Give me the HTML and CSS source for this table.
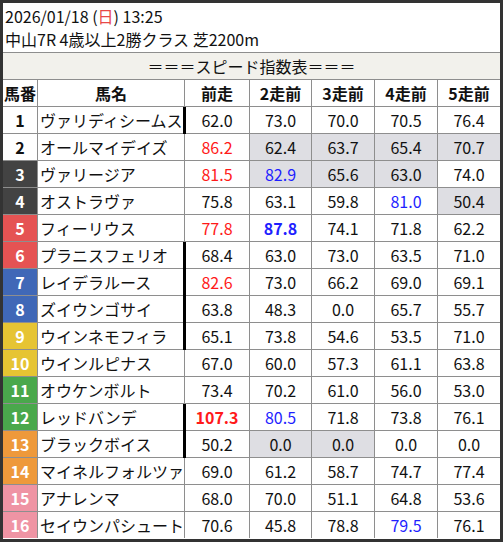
FILE: index.html
```html
<!DOCTYPE html>
<html lang="ja">
<head>
<meta charset="utf-8">
<link rel="stylesheet" href="styles.css">
</head>
<body>
<div class="frame">
  <div class="info">
    <div class="line">2026/01/18 (<span class="sun">日</span>) 13:25</div>
    <div class="line">中山7R 4歳以上2勝クラス 芝2200m</div>
  </div>
  <div class="title">＝＝＝スピード指数表＝＝＝</div>
  <div class="grid">
    <div class="h">馬番</div><div class="h">馬名</div><div class="h">前走</div><div class="h">2走前</div><div class="h">3走前</div><div class="h">4走前</div><div class="h">5走前</div>

    <div class="no w1">1</div><div class="name bar">ヴァリディシームス</div><div class="v">62.0</div><div class="v">73.0</div><div class="v">70.0</div><div class="v">70.5</div><div class="v">76.4</div>

    <div class="no w1">2</div><div class="name">オールマイデイズ</div><div class="v red">86.2</div><div class="v g">62.4</div><div class="v g">63.7</div><div class="v g">65.4</div><div class="v g">70.7</div>

    <div class="no w2">3</div><div class="name">ヴァリージア</div><div class="v red">81.5</div><div class="v g blue">82.9</div><div class="v g">65.6</div><div class="v g">63.0</div><div class="v">74.0</div>

    <div class="no w2">4</div><div class="name">オストラヴァ</div><div class="v">75.8</div><div class="v">63.1</div><div class="v">59.8</div><div class="v blue">81.0</div><div class="v g">50.4</div>

    <div class="no w3">5</div><div class="name">フィーリウス</div><div class="v red">77.8</div><div class="v blue b">87.8</div><div class="v">74.1</div><div class="v">71.8</div><div class="v">62.2</div>

    <div class="no w3">6</div><div class="name bar">プラニスフェリオ</div><div class="v">68.4</div><div class="v">63.0</div><div class="v">73.0</div><div class="v">63.5</div><div class="v">71.0</div>

    <div class="no w4">7</div><div class="name bar">レイデラルース</div><div class="v red">82.6</div><div class="v">73.0</div><div class="v">66.2</div><div class="v">69.0</div><div class="v">69.1</div>

    <div class="no w4">8</div><div class="name bar">ズイウンゴサイ</div><div class="v">63.8</div><div class="v">48.3</div><div class="v">0.0</div><div class="v">65.7</div><div class="v">55.7</div>

    <div class="no w5">9</div><div class="name bar">ウインネモフィラ</div><div class="v">65.1</div><div class="v">73.8</div><div class="v">54.6</div><div class="v">53.5</div><div class="v">71.0</div>

    <div class="no w5">10</div><div class="name">ウインルピナス</div><div class="v">67.0</div><div class="v">60.0</div><div class="v">57.3</div><div class="v">61.1</div><div class="v">63.8</div>

    <div class="no w6">11</div><div class="name">オウケンボルト</div><div class="v">73.4</div><div class="v">70.2</div><div class="v">61.0</div><div class="v">56.0</div><div class="v">53.0</div>

    <div class="no w6">12</div><div class="name bar">レッドバンデ</div><div class="v red b">107.3</div><div class="v blue">80.5</div><div class="v">71.8</div><div class="v">73.8</div><div class="v">76.1</div>

    <div class="no w7">13</div><div class="name bar">ブラックボイス</div><div class="v">50.2</div><div class="v g">0.0</div><div class="v g">0.0</div><div class="v">0.0</div><div class="v">0.0</div>

    <div class="no w7">14</div><div class="name">マイネルフォルツァ</div><div class="v">69.0</div><div class="v">61.2</div><div class="v">58.7</div><div class="v">74.7</div><div class="v">77.4</div>

    <div class="no w8">15</div><div class="name">アナレンマ</div><div class="v">68.0</div><div class="v">70.0</div><div class="v">51.1</div><div class="v">64.8</div><div class="v">53.6</div>

    <div class="no w8">16</div><div class="name">セイウンパシュート</div><div class="v">70.6</div><div class="v">45.8</div><div class="v">78.8</div><div class="v blue">79.5</div><div class="v">76.1</div>
  </div>
</div>
</body>
</html>
```

FILE: styles.css
```css
* { box-sizing: border-box; }
html, body { margin: 0; padding: 0; background: #fff; }
body {
  font-family: "Noto Sans CJK JP", "Noto Sans", sans-serif;
  font-size: 16px;
  color: #111;
}
.frame {
  width: 503px;
  height: 542px;
  border: 3px solid #333;
  background: #fff;
  overflow: hidden;
}
.info {
  height: 50px;
  padding: 2px 0 0 2px;
  border-bottom: 1px solid #8e8e8e;
}
.line {
  line-height: 23px;
  height: 23px;
  white-space: nowrap;
}
.sun { color: #e84848; }
.title {
  height: 27px;
  line-height: 26px;
  text-align: center;
  background: #f2f1ec;
  border-bottom: 1px solid #8e8e8e;
  white-space: nowrap;
}
.grid {
  display: grid;
  grid-template-columns: 34px 146px 64px 61px 62px 62px 62px;
  grid-auto-rows: 26px;
  gap: 1px;
  background: #8e8e8e;
}
.grid > div {
  background: #fff;
  line-height: 26px;
  text-align: center;
  white-space: nowrap;
  overflow: hidden;
}
.h { font-weight: bold; }
.no { font-weight: bold; color: #fff; }
.w1 { background: #fff !important; color: #111; }
.w2 { background: #434343 !important; }
.w3 { background: #e55353 !important; }
.w4 { background: #4068b7 !important; }
.w5 { background: #e6c433 !important; }
.w6 { background: #4aa84c !important; }
.w7 { background: #ee993b !important; }
.w8 { background: #ef94a4 !important; }
.grid > .name {
  text-align: left;
  padding-left: 2px;
  overflow: visible;
  position: relative;
}
.name.bar::after {
  content: "";
  position: absolute;
  top: 0;
  bottom: -1px;
  right: -2px;
  width: 3px;
  background: #000;
}
.grid > .g { background: #dedee3; }
.red { color: #ff1a1a; }
.blue { color: #1f1fff; }
.b { font-weight: bold; }
```
